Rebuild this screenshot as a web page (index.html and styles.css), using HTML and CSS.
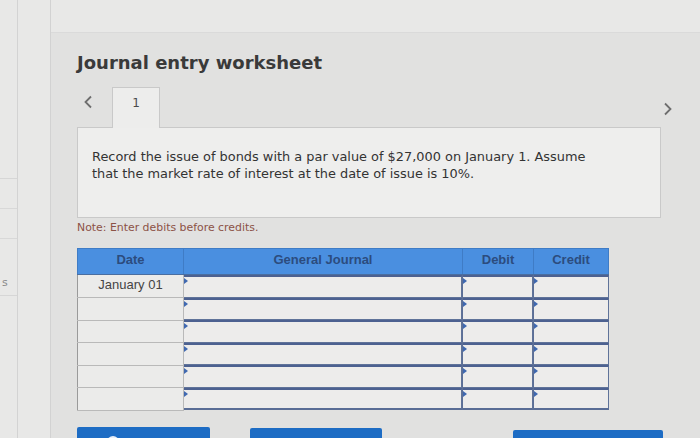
FILE: index.html
```html
<!DOCTYPE html>
<html>
<head>
<meta charset="utf-8">
<link rel="stylesheet" href="styles.css">
</head>
<body>
<div class="page">
  <aside class="side">
    <div class="side-box">
      <div class="side-row"></div>
      <div class="side-row"></div>
      <div class="side-row side-last"><span class="side-s">s</span></div>
    </div>
  </aside>
  <div class="gutter"></div>
  <main class="panel">
    <h1 class="title">Journal entry worksheet</h1>
    <div class="tabs">
      <div class="tabs-left">
        <span class="arrow arrow-left">
          <svg width="10" height="14" viewBox="0 0 10 14"><path d="M8 1.5 L2.5 7 L8 12.5" fill="none" stroke="#6e6e6e" stroke-width="1.8"/></svg>
        </span>
        <div class="tab">1</div>
      </div>
      <span class="arrow arrow-right">
        <svg width="10" height="14" viewBox="0 0 10 14"><path d="M2 1.5 L7.5 7 L2 12.5" fill="none" stroke="#6e6e6e" stroke-width="1.8"/></svg>
      </span>
    </div>
    <div class="prompt">
      Record the issue of bonds with a par value of $27,000 on January 1. Assume<br>
      that the market rate of interest at the date of issue is 10%.
    </div>
    <p class="note">Note: Enter debits before credits.</p>
    <table class="journal">
      <colgroup>
        <col class="c-date"><col class="c-gj"><col class="c-dr"><col class="c-cr">
      </colgroup>
      <thead>
        <tr><th>Date</th><th>General Journal</th><th>Debit</th><th>Credit</th></tr>
      </thead>
      <tbody>
        <tr><td class="date">January 01</td><td class="in"><div class="box"><i class="mark"></i></div></td><td class="in"><div class="box"><i class="mark"></i></div></td><td class="in"><div class="box"><i class="mark"></i></div></td></tr>
        <tr><td class="date"></td><td class="in"><div class="box"><i class="mark"></i></div></td><td class="in"><div class="box"><i class="mark"></i></div></td><td class="in"><div class="box"><i class="mark"></i></div></td></tr>
        <tr><td class="date"></td><td class="in"><div class="box"><i class="mark"></i></div></td><td class="in"><div class="box"><i class="mark"></i></div></td><td class="in"><div class="box"><i class="mark"></i></div></td></tr>
        <tr><td class="date"></td><td class="in"><div class="box"><i class="mark"></i></div></td><td class="in"><div class="box"><i class="mark"></i></div></td><td class="in"><div class="box"><i class="mark"></i></div></td></tr>
        <tr><td class="date"></td><td class="in"><div class="box"><i class="mark"></i></div></td><td class="in"><div class="box"><i class="mark"></i></div></td><td class="in"><div class="box"><i class="mark"></i></div></td></tr>
        <tr><td class="date"></td><td class="in"><div class="box"><i class="mark"></i></div></td><td class="in"><div class="box"><i class="mark"></i></div></td><td class="in"><div class="box"><i class="mark"></i></div></td></tr>
      </tbody>
    </table>
    <div class="buttons">
      <div class="btn btn-1"><span class="btn-dot"></span></div>
      <div class="btn btn-2"></div>
      <div class="btn btn-3"></div>
    </div>
  </main>
</div>
</body>
</html>
```
FILE: styles.css
```css
html, body {
  margin: 0;
  padding: 0;
}
body {
  width: 700px;
  height: 438px;
  overflow: hidden;
  background: #e8e8e7;
  font-family: "DejaVu Sans", Verdana, sans-serif;
  color: #383838;
}
.page {
  display: flex;
  height: 438px;
}
.side {
  width: 17px;
  border-right: 1px solid #d3d3d3;
  flex: none;
}
.side-box {
  margin-top: 178px;
  border-top: 1px solid #d6d6d6;
  border-bottom: 1px solid #d6d6d6;
}
.side-row {
  height: 29px;
  border-bottom: 1px solid #d8d8d8;
}
.side-last {
  height: 56px;
  border-bottom: none;
  display: flex;
  align-items: flex-end;
}
.side-s {
  font-size: 11px;
  color: #8a8a8a;
  margin: 0 0 6px 2px;
  line-height: 12px;
}
.gutter {
  width: 32px;
  flex: none;
  border-right: 1px solid #d2d2d2;
}
.panel {
  margin-top: 32px;
  flex: 1;
  background: #e1e1e0;
  padding: 18px 0 0 26px;
  border-top: 1px solid #dadada;
}
.title {
  margin: 0;
  font-size: 18px;
  line-height: 24px;
  font-weight: bold;
  color: #3a3a3a;
}
.tabs {
  margin-top: 12px;
  width: 596px;
  display: flex;
  justify-content: space-between;
  align-items: flex-start;
}
.tabs-left {
  display: flex;
  align-items: flex-start;
}
.arrow {
  display: block;
  line-height: 0;
}
.arrow-left {
  margin: 8px 0 0 6px;
}
.arrow-right {
  margin-top: 15px;
}
.tab {
  margin-left: 19px;
  width: 48px;
  border: 1px solid #c9c9c9;
  border-bottom: none;
  background: #ededec;
  text-align: center;
  font-size: 12px;
  line-height: 14px;
  padding-top: 8px;
  box-sizing: border-box;
  height: 41px;
  color: #4a4a4a;
  position: relative;
  z-index: 1;
  margin-bottom: -1px;
}
.prompt {
  width: 584px;
  height: 91px;
  box-sizing: border-box;
  border: 1px solid #c9c9c9;
  background: #eeeeed;
  padding: 21px 0 0 14px;
  font-size: 12.9px;
  line-height: 16.5px;
  color: #333;
}
.note {
  margin: 3px 0 0 0;
  font-size: 10.9px;
  line-height: 14px;
  color: #8c5246;
}
.journal {
  margin-top: 13px;
  border-collapse: collapse;
  table-layout: fixed;
  width: 531px;
  font-family: "Liberation Sans", Arial, sans-serif;
}
.c-date { width: 106px; }
.c-gj { width: 279px; }
.c-dr { width: 71px; }
.c-cr { width: 75px; }
.journal th {
  background: #4a8fe0;
  color: #2c4c7e;
  font-size: 13px;
  font-weight: bold;
  height: 26px;
  padding: 0 0 4px 0;
  border: 1px solid #3f7cc6;
  border-bottom: 1px solid #4a6ea0;
  box-sizing: border-box;
}
.journal td {
  height: 22.5px;
  padding: 0;
  box-sizing: border-box;
}
.journal td.date {
  background: #ebebea;
  border: 1px solid #b9b9b9;
  border-left-color: #9a9a9a;
  text-align: center;
  font-size: 13px;
  color: #444;
  vertical-align: top;
  line-height: 19px;
}
.journal td.in {
  border-left: 1px solid #5c6f96;
  background: #e6e6e5;
}
.box {
  position: relative;
  height: 22.5px;
  box-sizing: border-box;
  border: 1px solid #607399;
  border-top: 2px solid #4d6190;
  border-left: none;
  background: #edeceb;
}
.journal tr:last-child .box {
  border-bottom: 2px solid #5a6d95;
}
.mark {
  position: absolute;
  left: 0;
  top: 1px;
  width: 0;
  height: 0;
  border-top: 3px solid transparent;
  border-bottom: 3px solid transparent;
  border-left: 4px solid #3f68b0;
}
.buttons {
  margin-top: 16px;
  display: flex;
}
.btn {
  height: 12px;
  background: #1d6cc4;
  border-radius: 2px 2px 0 0;
}
.btn-1 { width: 133px; position: relative; }
.btn-2 { width: 132px; margin-left: 40px; margin-top: 1px; }
.btn-3 { width: 150px; margin-left: 131px; margin-top: 3px; }
.btn-dot {
  position: absolute;
  left: 30px;
  top: 9px;
  width: 12px;
  height: 12px;
  border-radius: 50%;
  background: #e8eef8;
}
```
